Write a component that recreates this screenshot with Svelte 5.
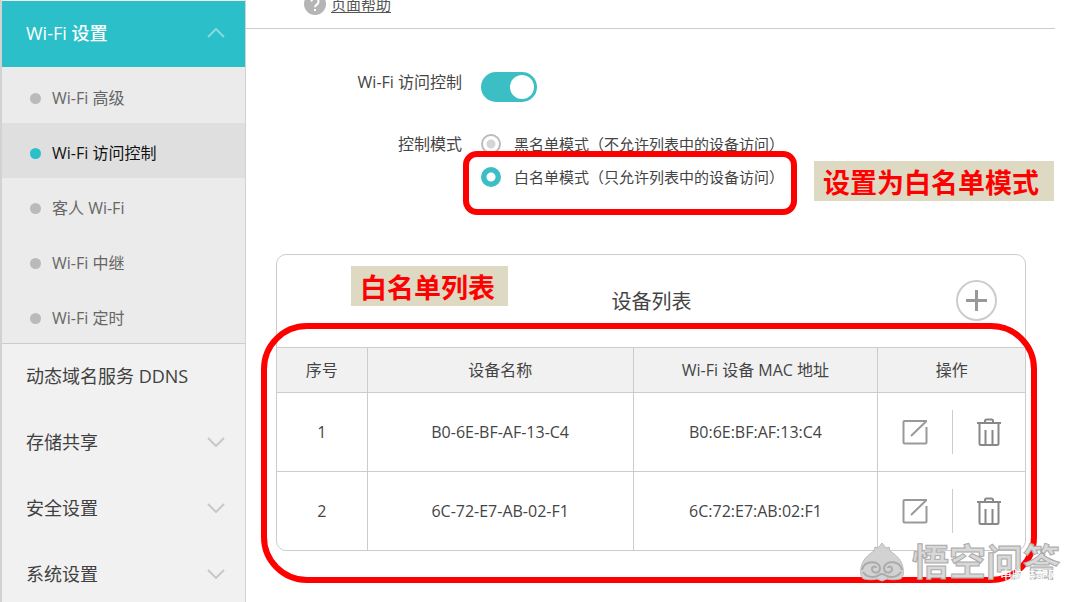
<script lang="ts">
  interface MenuItem {
    label: string;
    expandable: boolean;
  }

  interface Device {
    id: number;
    name: string;
    mac: string;
  }

  const wifiPages = ["Wi-Fi 高级", "Wi-Fi 访问控制", "客人 Wi-Fi", "Wi-Fi 中继", "Wi-Fi 定时"];

  const menu: MenuItem[] = [
    { label: "动态域名服务 DDNS", expandable: false },
    { label: "存储共享", expandable: true },
    { label: "安全设置", expandable: true },
    { label: "系统设置", expandable: true },
  ];

  const modes = [
    { value: "black", label: "黑名单模式（不允许列表中的设备访问）" },
    { value: "white", label: "白名单模式（只允许列表中的设备访问）" },
  ];

  let current = $state("Wi-Fi 访问控制");
  let enabled = $state(true);
  let mode = $state("white");
  let devices = $state<Device[]>([
    { id: 1, name: "B0-6E-BF-AF-13-C4", mac: "B0:6E:BF:AF:13:C4" },
    { id: 2, name: "6C-72-E7-AB-02-F1", mac: "6C:72:E7:AB:02:F1" },
  ]);

  function remove(id: number) {
    devices = devices.filter((device) => device.id !== id);
  }
</script>

<div class="page">
  <nav class="sidebar">
    <button class="menu-item open" aria-expanded="true">
      <span>Wi-Fi 设置</span>
      <svg class="chevron" viewBox="0 0 18 10" aria-hidden="true"><path d="M1 9l8-8 8 8" /></svg>
    </button>
    <div class="submenu">
      {#each wifiPages as page}
        <button class="sub-item" class:active={page === current} onclick={() => (current = page)}>
          <span class="dot"></span>
          <span>{page}</span>
        </button>
      {/each}
    </div>
    {#each menu as item}
      <button class="menu-item">
        <span>{item.label}</span>
        {#if item.expandable}
          <svg class="chevron" viewBox="0 0 18 10" aria-hidden="true"><path d="M1 1l8 8 8-8" /></svg>
        {/if}
      </button>
    {/each}
  </nav>

  <main>
    <div class="help">
      <svg viewBox="0 0 22 22" aria-hidden="true">
        <circle cx="11" cy="11" r="11" />
        <path d="M7.500 8.500a3.500 3.500 0 1 1 5.500 2.900c-1.400 1-2 1.500-2 2.800M11 16v2" />
      </svg>
      <a href="#help">页面帮助</a>
    </div>

    <form class="settings">
      <label class="field-label" for="access">Wi-Fi 访问控制</label>
      <input id="access" class="switch" type="checkbox" role="switch" bind:checked={enabled} />

      <span class="field-label" id="mode-label">控制模式</span>
      <div class="modes" role="radiogroup" aria-labelledby="mode-label">
        {#each modes as item}
          <label class="mode">
            <input type="radio" name="mode" value={item.value} bind:group={mode} />
            <span>{item.label}</span>
          </label>
        {/each}
        <div class="outline mode-outline"></div>
        <strong class="note mode-note">设置为白名单模式</strong>
      </div>
    </form>

    <section class="panel">
      <header>
        <h2>设备列表</h2>
        <button class="add" type="button" aria-label="添加">
          <svg viewBox="0 0 21 21" aria-hidden="true"><path d="M10.500 0v21M0 10.500h21" /></svg>
        </button>
      </header>
      <table>
        <thead>
          <tr>
            <th class="col-id">序号</th>
            <th class="col-name">设备名称</th>
            <th class="col-mac">Wi-Fi 设备 MAC 地址</th>
            <th>操作</th>
          </tr>
        </thead>
        <tbody>
          {#each devices as device (device.id)}
            <tr>
              <td>{device.id}</td>
              <td>{device.name}</td>
              <td>{device.mac}</td>
              <td>
                <div class="actions">
                  <button type="button" aria-label="编辑">
                    <svg class="edit" viewBox="0 0 26 26" aria-hidden="true">
                      <path d="M25 2H2.500Q1.500 2 1.500 3V23.500Q1.500 24.500 2.500 24.500H23.500Q24.500 24.500 24.500 23.500V8M24 2.500L9 17" />
                    </svg>
                  </button>
                  <button type="button" aria-label="删除" onclick={() => remove(device.id)}>
                    <svg class="trash" viewBox="0 0 26 28" aria-hidden="true">
                      <path d="M1 5h24M9 5V3Q9 1.500 10.500 1.500H15.500Q17 1.500 17 3V5M3.500 5V25.500Q3.500 27 5 27H21Q22.500 27 22.500 25.500V5M9.500 12V26.500M16.500 12V26.500" />
                    </svg>
                  </button>
                </div>
              </td>
            </tr>
          {/each}
        </tbody>
      </table>
      <div class="outline list-outline"></div>
      <strong class="note list-note">白名单列表</strong>
    </section>
  </main>

  <div class="watermark">
    <svg viewBox="0 0 44 40" aria-hidden="true">
      <path
        class="head"
        d="M22 1l4 5 3-1 1 4c6 4 12 9 13 17 1 6 0 10-3 11-5 1-9 1-13 0l-5 2-5-2c-4 1-8 1-13 0-3-1-4-5-3-11C2 18 8 13 14 9l1-4 3 1z"
      />
      <path
        class="face"
        d="M2 28c1-9 17-11 18-2 0 6-8 6-8 1 0-3 4-3 4-1M42 28c-1-9-17-11-18-2 0 6 8 6 8 1 0-3-4-3-4-1M3 30c4 6 12 6 16 3q3-2 6 0c4 3 12 3 16-3"
      />
    </svg>
    <span class="brand">悟空问答</span>
    <span class="site">电脑装配网</span>
  </div>
</div>

<style>
  :global(body) {
    overflow: hidden;
    background: #fff;
  }

  .page {
    position: relative;
    display: flex;
    height: 100vh;
    overflow: hidden;
    font-family: "Open Sans", "Noto Sans CJK SC", sans-serif;
    font-size: 16px;
    line-height: 20px;
    color: #444;
  }

  button {
    padding: 0;
    border: 0;
    background: none;
    font: inherit;
    color: inherit;
    cursor: pointer;
  }

  svg {
    fill: none;
    stroke: currentColor;
  }

  .sidebar {
    flex: none;
    box-sizing: border-box;
    width: 246px;
    padding-top: 1px;
    border: solid #d2d2d2;
    border-width: 0 1px 0 2px;
    background: #f1f1f1;
  }

  .menu-item {
    display: flex;
    align-items: center;
    justify-content: space-between;
    width: 100%;
    height: 66px;
    padding: 0 20px 3px 24px;
    font-size: 18px;
    color: #404040;
  }

  .menu-item.open {
    background: #2abfc9;
    font-weight: 500;
    color: #fff;
  }

  .chevron {
    width: 18px;
    height: 10px;
    color: #c8c8c8;
    stroke-width: 2;
  }

  .open .chevron {
    color: #85dbe0;
  }

  .submenu {
    padding-top: 1px;
    border-bottom: 1px solid #ccc;
    background: #ebebeb;
  }

  .sub-item {
    display: flex;
    align-items: center;
    gap: 11px;
    width: 100%;
    height: 55px;
    padding: 5px 28px 0;
    color: #666;
  }

  .sub-item.active {
    background: #dfdfdf;
    color: #111;
  }

  .dot {
    width: 11px;
    height: 11px;
    border-radius: 50%;
    background: #bababa;
  }

  .active .dot {
    background: #2abfc9;
  }

  main {
    flex: 1;
    min-width: 0;
    padding-right: 23px;
  }

  .help {
    display: flex;
    gap: 5px;
    height: 28px;
    padding-left: 58px;
    border-bottom: 1px solid #ccc;
    font-size: 15px;
  }

  .help svg {
    width: 22px;
    height: 22px;
    margin-top: -7px;
    stroke: #fff;
    stroke-width: 2;
  }

  .help circle {
    fill: #b5b5b5;
    stroke: none;
  }

  .help a {
    margin-top: -6px;
    color: #555;
    text-underline-offset: 2px;
  }

  .settings {
    display: grid;
    grid-template-columns: 216px 1fr;
    gap: 32px 19px;
    margin-top: 43px;
  }

  .field-label {
    text-align: right;
  }

  .switch {
    appearance: none;
    display: flex;
    width: 56px;
    height: 30px;
    margin: 0;
    padding: 3px;
    border-radius: 15px;
    background: #bbb;
  }

  .switch::before {
    content: "";
    width: 24px;
    height: 24px;
    border-radius: 50%;
    background: #fff;
  }

  .switch:checked {
    justify-content: flex-end;
    background: #3bbfc4;
  }

  .modes {
    position: relative;
    display: flex;
    flex-direction: column;
    align-items: flex-start;
    gap: 13px;
    font-size: 15px;
  }

  .mode {
    display: flex;
    gap: 13px;
    white-space: nowrap;
  }

  .mode input {
    appearance: none;
    box-sizing: border-box;
    width: 20px;
    height: 20px;
    margin: 0;
    border: 2px solid #bbb;
    border-radius: 50%;
    background: radial-gradient(#d5d5d5 4px, #fff 5px);
  }

  .mode input:checked {
    border-color: #3bbfc4;
    background: radial-gradient(#fff 4px, #3bbfc4 5px);
  }

  /* red marker outlines and captions drawn over the form */
  .outline {
    position: absolute;
    box-sizing: border-box;
    border: 6px solid #f00;
    pointer-events: none;
  }

  .mode-outline {
    top: 17px;
    left: -18px;
    width: 334px;
    height: 64px;
    border-radius: 14px;
  }

  .list-outline {
    inset: 68px -12px -33px -16px;
    border-radius: 46px;
  }

  .note {
    position: absolute;
    box-sizing: border-box;
    height: 40px;
    padding-left: 9px;
    background: #ddd9c3;
    font-size: 27px;
    line-height: 44px;
    white-space: nowrap;
    color: #f00;
  }

  .mode-note {
    top: 27px;
    left: 333px;
    width: 240px;
  }

  .list-note {
    top: 11px;
    left: 74px;
    width: 157px;
  }

  .panel {
    position: relative;
    margin: 67px 29px 0 30px;
    border: 1px solid #ccc;
    border-radius: 10px;
  }

  header {
    display: flex;
    align-items: center;
    box-sizing: border-box;
    height: 92px;
    padding: 0 28px 2px 29px;
  }

  h2 {
    flex: 1;
    margin: 0;
    padding: 4px 0 0 41px;
    font-size: 20px;
    font-weight: 400;
    text-align: center;
  }

  .add {
    display: grid;
    place-items: center;
    box-sizing: border-box;
    width: 41px;
    height: 41px;
    border: 2px solid #ccc;
    border-radius: 50%;
    color: #999;
  }

  .add svg {
    width: 21px;
    height: 21px;
    stroke-width: 3;
  }

  table {
    width: 100%;
    table-layout: fixed;
    border-spacing: 0;
    text-align: center;
  }

  th,
  td {
    padding: 0;
    border-top: 1px solid #ccc;
  }

  th {
    height: 44px;
    background: #f1f1f1;
    font-weight: 400;
  }

  td {
    height: 78px;
  }

  th + th,
  td + td {
    border-left: 1px solid #ccc;
  }

  .col-id {
    width: 12%;
  }

  .col-name {
    width: 35.4%;
  }

  .col-mac {
    width: 32.6%;
  }

  .actions {
    display: grid;
    grid-template-columns: 1fr 1fr;
    color: #999;
  }

  .actions button {
    display: grid;
    place-items: center;
    height: 44px;
  }

  .actions button + button {
    border-left: 1px solid #ccc;
    color: #888;
  }

  .edit,
  .trash {
    width: 26px;
    stroke-width: 2;
  }

  .watermark {
    position: absolute;
    right: 18px;
    bottom: 20px;
    display: flex;
    align-items: center;
    gap: 8px;
    pointer-events: none;
  }

  .watermark svg {
    width: 44px;
    height: 40px;
  }

  .head {
    fill: #d2d2d2;
    stroke: #bbb;
  }

  .face {
    stroke: #aaa;
    stroke-width: 2;
  }

  .brand {
    font-size: 37px;
    font-weight: 700;
    line-height: 40px;
    color: #d8d8d8;
    -webkit-text-stroke: 1px #aaa;
  }

  .site {
    position: absolute;
    right: 0;
    bottom: -4px;
    font-size: 12px;
    color: #fff;
  }
</style>
